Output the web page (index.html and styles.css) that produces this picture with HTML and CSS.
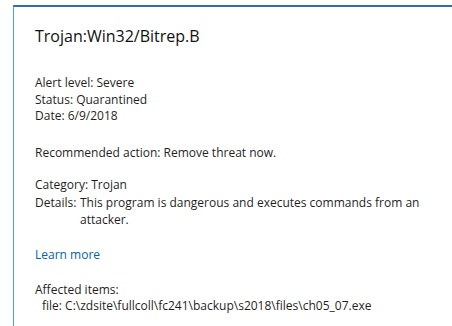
FILE: index.html
```html
<!DOCTYPE html>
<html lang="en">
  <head>
    <meta charset="UTF-8" />
    <meta name="viewport" content="width=device-width, initial-scale=1.0" />
    <link rel="stylesheet" href="styles.css">
    <title>Threat details</title>
  </head>
  <body>
    <div class="panel">
      <h1 class="title">Trojan:Win32/Bitrep.B</h1>

      <div class="group status">
        <p>Alert level: Severe</p>
        <p>Status: Quarantined</p>
        <p>Date: 6/9/2018</p>
      </div>

      <div class="group action">
        <p>Recommended action: Remove threat now.</p>
      </div>

      <div class="group info">
        <p>Category: Trojan</p>
        <div class="row">
          <span class="label">Details:</span>
          <span class="value">This program is dangerous and executes commands from an attacker.</span>
        </div>
      </div>

      <div class="group more">
        <a class="link" href="#">Learn more</a>
      </div>

      <div class="group">
        <p>Affected items:</p>
        <p class="item">file: C:\zdsite\fullcoll\fc241\backup\s2018\files\ch05_07.exe</p>
      </div>
    </div>
  </body>
</html>
```

FILE: styles.css
```css
* {
  padding: 0;
  margin: 0;
}

body {
  background: white;
  overflow: hidden;
  font-family: "Open Sans", "Noto Sans", sans-serif;
  color: #1f1f1f;
}

.panel {
  margin: 5px 0 0 13px;
  height: 330px;
  border-top: 2px solid #2e6db4;
  border-left: 1px solid #5b9bd5;
  padding: 16px 0 0 21px;
  box-sizing: border-box;
}

.title {
  font-size: 16px;
  font-weight: 400;
  line-height: 26px;
  margin-bottom: 26px;
  color: #111;
}

.group {
  font-size: 12px;
  line-height: 16.5px;
}

.group.status {
  margin-bottom: 20px;
}

.group.action {
  margin-bottom: 15.5px;
}

.group.info {
  margin-bottom: 18.5px;
}

.group.more {
  margin-bottom: 18.5px;
}

.row {
  display: flex;
  margin-top: 2px;
}

.label {
  width: 45px;
  flex: none;
}

.value {
  width: 360px;
}

.link {
  color: #0063b1;
  text-decoration: none;
}

.item {
  padding-left: 7px;
}
```
